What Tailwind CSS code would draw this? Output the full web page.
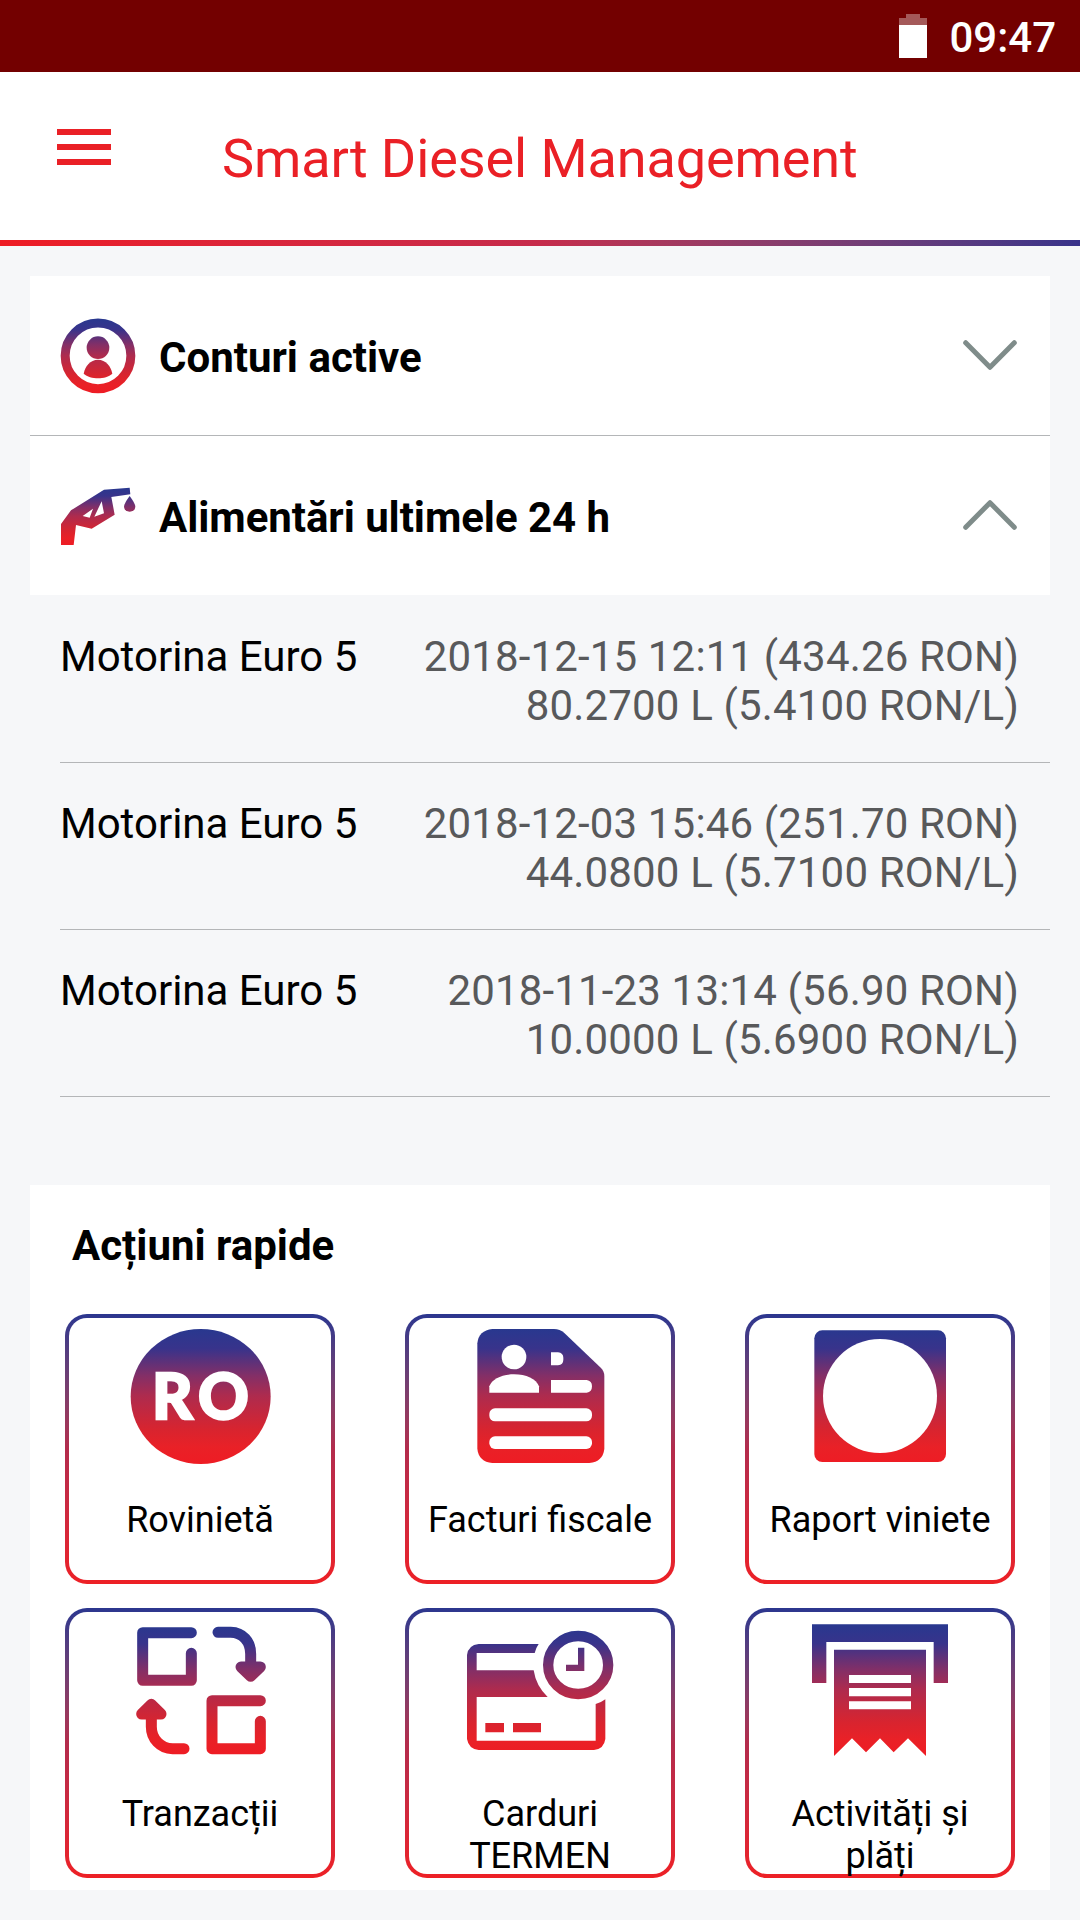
<!DOCTYPE html>
<html lang="ro">
<head>
<meta charset="utf-8">
<title>Smart Diesel Management</title>
<script src="https://cdn.jsdelivr.net/npm/@tailwindcss/browser@4"></script>
</head>
<body class="w-[1080px] h-[1920px] overflow-hidden bg-[#f6f7f9] font-[Roboto,sans-serif] text-black">
<svg class="absolute size-0" aria-hidden="true">
  <defs>
    <linearGradient id="brand" gradientUnits="userSpaceOnUse" x1="0" y1="85" x2="0" y2="490">
      <stop offset="0" stop-color="#28388f"/><stop offset=".15" stop-color="#38338b"/><stop offset=".35" stop-color="#832f67"/><stop offset=".5" stop-color="#ae2b4e"/><stop offset=".75" stop-color="#d8242f"/><stop offset=".88" stop-color="#e92127"/><stop offset="1" stop-color="#ee1c24"/>
    </linearGradient>
    <linearGradient id="brand2" href="#brand" y1="72" y2="465"/>
    <linearGradient id="account" href="#brand" y1="174" y2="399"/>
    <linearGradient id="fuel" href="#brand" y1="680" y2="853"/>
  </defs>
</svg>

<header>
  <div class="h-[72px] bg-[#730000] flex justify-end items-center pr-[24px] gap-[22px] text-white">
    <svg class="w-7 h-11" viewBox="0 0 28 44"><path d="M7 0h14v4h7v8H0V4h7z" fill="#fff" fill-opacity=".35"/><path d="M0 11h28v33H0z" fill="#fff"/></svg>
    <span class="text-[42px] leading-[48px] font-medium pt-[4px]">09:47</span>
  </div>
  <div class="h-[168px] bg-white flex items-start">
    <div class="w-[54px] ml-[57px] mt-[57px] flex flex-col gap-[9px]">
      <i class="h-[6px] bg-[#ea2026]"></i><i class="h-[6px] bg-[#ea2026]"></i><i class="h-[6px] bg-[#ea2026]"></i>
    </div>
    <h1 class="ml-[111px] mt-[55px] text-[54px] leading-[64px] tracking-[-0.1px] text-[#ea2026] whitespace-nowrap">Smart Diesel Management</h1>
  </div>
  <div class="h-[6px] bg-linear-to-r from-[#ee1c24] via-[#c62b4b] to-[#39338b]"></div>
</header>

<main class="px-[30px] pt-[30px]">
  <section>
    <div class="h-[160px] bg-white border-b border-[#b4b6b8] flex items-center pl-[30px] pr-[33px]">
      <svg class="w-[76px] h-[76px]" viewBox="120 173 228 228" fill="url(#account)">
        <circle cx="234" cy="286.500" r="98.500" fill="none" stroke="url(#account)" stroke-width="27"/>
        <circle cx="234" cy="262" r="34"/><path d="M191 340c4-22 20-42 43-42s39 20 43 42c-10 9-27 14-43 14s-33-5-43-14z"/>
      </svg>
      <h2 class="ml-[23px] text-[42px] leading-[50px] font-bold pt-[5px]">Conturi active</h2>
      <svg class="ml-auto -mt-[2px] w-[54px] h-[30px]" viewBox="0 0 54 30" fill="none" stroke="#7f8c8a" stroke-width="5" stroke-linecap="round" stroke-linejoin="round"><path d="M2.700 2.700 27 27.300 51.300 2.700"/></svg>
    </div>
    <div class="h-[159px] bg-white flex items-center pl-[30px] pr-[33px]">
      <svg class="w-[76px] h-[76px]" viewBox="120 652 228 228" fill="url(#fuel)">
        <path fill-rule="evenodd" d="M123 790 153 749 252 687 329 681 331 701 274 709 284 762 215 804 168 793 161 853 123 853zM245 722 252 758 223 768zM219 744 188 766 209 771z"/>
        <path d="M329 706q17 23 17 32a17 15 0 0 1-34 0q0-9 17-32z"/>
      </svg>
      <h2 class="ml-[23px] text-[42px] leading-[50px] font-bold tracking-[-0.05px] pt-[5px]">Alimentări ultimele 24 h</h2>
      <svg class="ml-auto -mt-[2px] w-[54px] h-[30px]" viewBox="0 0 54 30" fill="none" stroke="#7f8c8a" stroke-width="5" stroke-linecap="round" stroke-linejoin="round"><path d="M2.700 27.300 27 2.700 51.300 27.300"/></svg>
    </div>
  </section>

  <ul class="ml-[30px] text-[42px] leading-[49px]">
    <li class="h-[168px] pt-[37px] pr-[31px] flex justify-between border-b border-[#b4b6b8]"><span>Motorina Euro 5</span><span class="text-right text-[#58595b] tracking-[0.16px]">2018-12-15 12:11 (434.26 RON)<br>80.2700 L (5.4100 RON/L)</span></li>
    <li class="h-[167px] pt-[36px] pr-[31px] flex justify-between border-b border-[#b4b6b8]"><span>Motorina Euro 5</span><span class="text-right text-[#58595b] tracking-[0.16px]">2018-12-03 15:46 (251.70 RON)<br>44.0800 L (5.7100 RON/L)</span></li>
    <li class="h-[167px] pt-[36px] pr-[31px] flex justify-between border-b border-[#b4b6b8]"><span>Motorina Euro 5</span><span class="text-right text-[#58595b] tracking-[0.16px]">2018-11-23 13:14 (56.90 RON)<br>10.0000 L (5.6900 RON/L)</span></li>
  </ul>

  <section class="mt-[88px] h-[705px] bg-white px-[35px] pt-[36px]">
    <h2 class="ml-[7px] text-[42px] leading-[50px] font-bold">Acțiuni rapide</h2>
    <div class="mt-[43px] grid grid-cols-[270px_270px_270px] gap-x-[70px] gap-y-6 text-[36px] leading-[42px] text-center">

      <div class="h-[270px] p-1 rounded-[22px] bg-linear-to-b from-[#2b368f] via-[#b32b4c] to-[#ed2025]"><div class="h-full bg-white rounded-[18px]">
        <svg class="block w-[262px] h-[181px]" viewBox="57 54 786 543">
          <ellipse cx="452" cy="289.500" rx="210" ry="202.500" fill="url(#brand)"/>
          <text y="358" x="306 444" fill="#fff" stroke="#fff" stroke-width="7" font-family="Lato, sans-serif" font-weight="900" font-size="188">RO</text>
        </svg>
        <p>Rovinietă</p>
      </div></div>

      <div class="h-[270px] p-1 rounded-[22px] bg-linear-to-b from-[#2b368f] via-[#b32b4c] to-[#ed2025]"><div class="h-full bg-white rounded-[18px]">
        <svg class="block w-[262px] h-[181px]" viewBox="57 54 786 543" fill="#fff">
          <path fill="url(#brand)" d="M307 87H492q18 0 31 12L633 204q10 10 10 24V446q-4 39-45 43H307q-41-4-45-43V130q4-39 45-43z"/>
          <circle cx="372" cy="171" r="37"/><path d="M298 278V259c8-22 38-36 74-36s67 14 75 36v19z"/>
          <path d="M483 157h21q16 2 16 16v6q0 15-16 17H483zM483 240H590q16 2 16 19t-16 19H483z"/>
          <rect x="298" y="325" width="308" height="39" rx="17"/><rect x="298" y="409" width="308" height="38" rx="17"/>
        </svg>
        <p>Facturi fiscale</p>
      </div></div>

      <div class="h-[270px] p-1 rounded-[22px] bg-linear-to-b from-[#2b368f] via-[#b32b4c] to-[#ed2025]"><div class="h-full bg-white rounded-[18px]">
        <svg class="block w-[262px] h-[181px]" viewBox="57 54 786 543">
          <rect x="253" y="91" width="395" height="395" rx="24" fill="url(#brand)"/><circle cx="450" cy="288" r="171" fill="#fff"/>
        </svg>
        <p>Raport viniete</p>
      </div></div>

      <div class="h-[270px] p-1 rounded-[22px] bg-linear-to-b from-[#2b368f] via-[#b32b4c] to-[#ed2025]"><div class="h-full bg-white rounded-[18px]">
        <svg class="block w-[262px] h-[181px]" viewBox="57 36 786 543" fill="none" stroke="url(#brand2)" stroke-width="33" stroke-linecap="round" stroke-linejoin="round">
          <path d="M424 98H278V241H424V160M631 302H486V446H631V364M504 97H542C578 98 602 124 602 162V210M402 446H368C330 445 304 415 304 380V330"/>
          <path fill="url(#brand2)" d="M573 201H631L602 229zM275 342H333L304 313z"/>
        </svg>
        <p>Tranzacții</p>
      </div></div>

      <div class="h-[270px] p-1 rounded-[22px] bg-linear-to-b from-[#2b368f] via-[#b32b4c] to-[#ed2025]"><div class="h-full bg-white rounded-[18px]">
        <svg class="block w-[262px] h-[181px]" viewBox="57 36 786 543" fill="url(#brand2)">
          <path d="M446 132H266q-31 3-35 33V417q5 30 35 33H612q30-3 34-33V298q-13 10-29 14V422H260V291H473Q438 258 431 211H260V159H434Q437 145 446 132z"/>
          <ellipse cx="564.500" cy="195" rx="90" ry="87" fill="none" stroke="url(#brand2)" stroke-width="31"/>
          <path d="M564 143h19v70h-55v-19h36zM286 369h56v28h-56zM369 369h84v28h-84z"/>
        </svg>
        <p>Carduri<br>TERMEN</p>
      </div></div>

      <div class="h-[270px] p-1 rounded-[22px] bg-linear-to-b from-[#2b368f] via-[#b32b4c] to-[#ed2025]"><div class="h-full bg-white rounded-[18px]">
        <svg class="block w-[262px] h-[181px]" viewBox="57 36 786 543" fill="url(#brand2)">
          <path d="M246 73H654V249H611V126H289V249H246z"/>
          <path fill-rule="evenodd" d="M312 149H588V468L534 415 491 457 450 415 408 457 366 415 312 468zM357 225V249H543V225zM357 264V289H543V264zM357 304V328H543V304z"/>
        </svg>
        <p>Activități și<br>plăți</p>
      </div></div>
    </div>
  </section>
</main>
</body>
</html>
